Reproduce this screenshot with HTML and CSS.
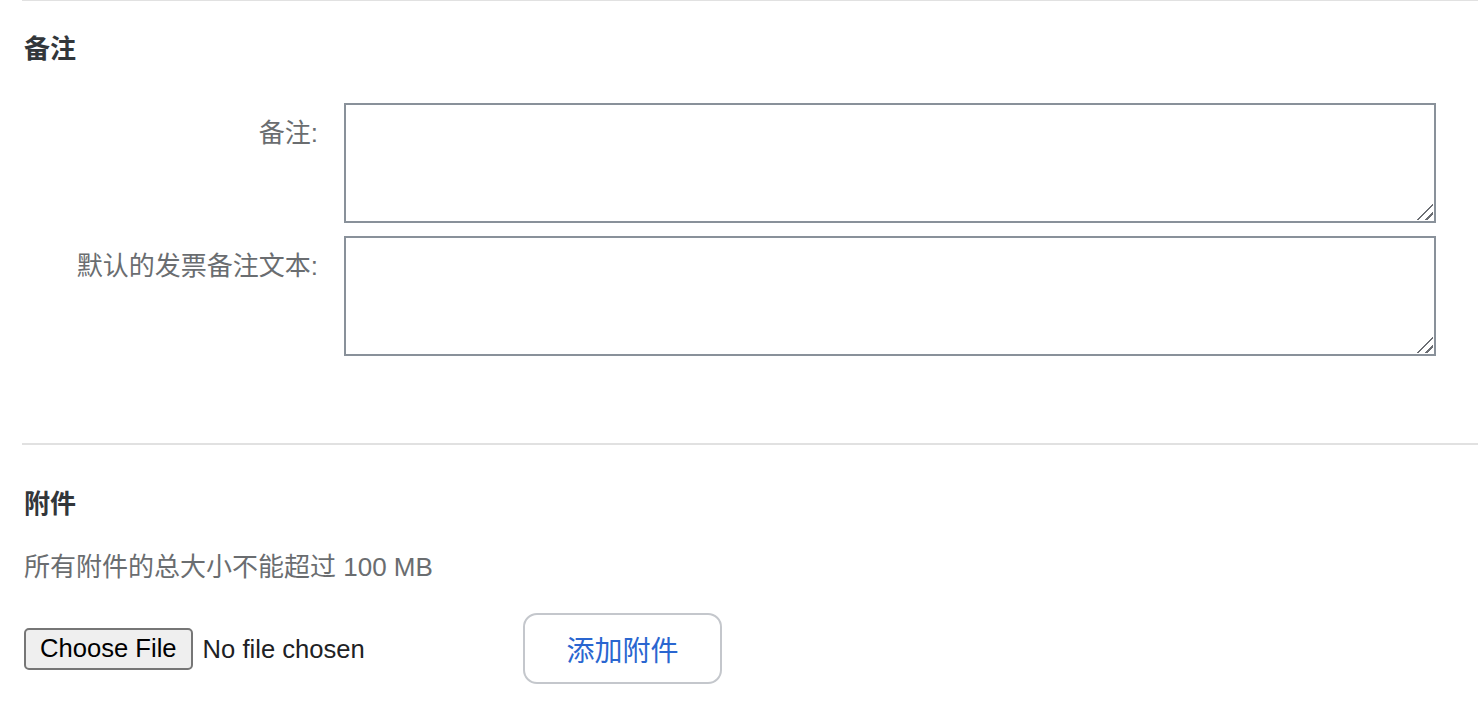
FILE: index.html
```html
<!DOCTYPE html>
<html>
<head>
  <title>备注与附件</title>
  <link rel="stylesheet" href="styles.css">
</head>
<body>
  <div class="section section-notes">
    <h2 class="section-title">备注</h2>

    <form class="note-form">
      <label for="note">备注:</label>
      <textarea id="note" name="note"></textarea>

      <label for="invoiceNote">默认的发票备注文本:</label>
      <textarea id="invoiceNote" name="invoiceNote"></textarea>
    </form>
  </div>

  <div class="section section-files">
    <h2 class="section-title">附件</h2>

    <p class="hint">所有附件的总大小不能超过 100 MB</p>

    <div class="upload-row">
      <input type="file" id="file" name="file" class="file-input">
      <button type="button" class="add-btn">添加附件</button>
    </div>
  </div>
</body>
</html>
```

FILE: styles.css
```css
body {
  margin: 0;
  padding: 0;
  font-family: "Liberation Sans", "Noto Sans CJK SC", sans-serif;
  color: #32363a;
  background: #fff;
}

.section {
  margin-left: 22px;
  padding-left: 2px;
  border-top: 2px solid #e1e1e1;
}

.section-notes {
  margin-top: -1px;
  padding-bottom: 87px;
}

.section-title {
  margin: 0;
  font-size: 26px;
  font-weight: bold;
  line-height: 36px;
  color: #32363a;
}

.section-notes .section-title {
  padding-top: 30px;
}

.section-files .section-title {
  padding-top: 41px;
}

.note-form {
  display: grid;
  grid-template-columns: 294px 1fr;
  column-gap: 26px;
  row-gap: 13px;
  margin: 36px 42px 0 0;
}

.note-form label {
  text-align: right;
  font-size: 26px;
  line-height: 36px;
  padding-top: 12px;
  color: #6a6d70;
}

.note-form textarea {
  display: block;
  height: 120px;
  box-sizing: border-box;
  border: 2px solid #89919a;
  border-radius: 0;
  padding: 8px;
  font-family: inherit;
  font-size: 26px;
  resize: none;
  background-color: #fff;
  background-image: linear-gradient(135deg, transparent 47%, #6b6e73 47%, #6b6e73 55%, transparent 55%, transparent 74%, #6b6e73 74%, #6b6e73 82%, transparent 82%);
  background-size: 16px 16px;
  background-position: right 1px bottom 1px;
  background-repeat: no-repeat;
}

.hint {
  margin: 27px 0 0;
  font-size: 26px;
  line-height: 36px;
  color: #6a6d70;
}

.upload-row {
  display: flex;
  align-items: center;
  margin-top: 28px;
}

.file-input {
  width: 499px;
  font-family: "Liberation Sans", sans-serif;
  font-size: 25.6px;
  color: #202124;
}

.file-input::file-selector-button {
  font-family: "Liberation Sans", sans-serif;
  font-size: 25.6px;
  height: 42px;
  padding: 0 14px;
  margin-right: 10px;
  border: 2px solid #767676;
  border-radius: 5px;
  background: #efefef;
  color: #000;
}

.add-btn {
  width: 199px;
  height: 71px;
  border: 2px solid #c4c7cc;
  border-radius: 14px;
  background: #fff;
  color: #2a66d0;
  font-family: "Noto Sans CJK SC", sans-serif;
  font-size: 28px;
  cursor: pointer;
}
```
